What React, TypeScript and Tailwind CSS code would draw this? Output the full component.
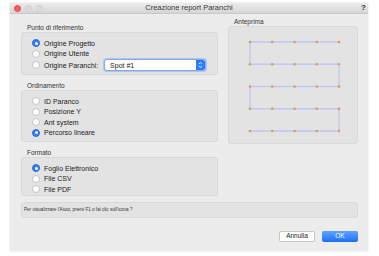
import React from "react";

const font = { fontFamily: '"Liberation Sans", Arial, sans-serif' };

function Radio({ label, checked }: { label: string; checked?: boolean }) {
  return (
    <div className="flex items-center h-[10.5px] gap-[4px]">
      {checked ? (
        <div className="w-[8px] h-[8px] rounded-full bg-[#2f7df6] border border-[#2a6fe0] flex items-center justify-center">
          <div className="w-[3px] h-[3px] rounded-full bg-white" />
        </div>
      ) : (
        <div className="w-[8px] h-[8px] rounded-full bg-white border border-[#c4c4c4]" />
      )}
      <span className="text-[7px] leading-none text-[#222]">{label}</span>
    </div>
  );
}

function Section({ title, children, h }: { title: string; children: React.ReactNode; h: string }) {
  return (
    <div className="flex flex-col">
      <div className="text-[6.5px] leading-none text-[#333] pl-[6px] h-[9px] flex items-end pb-[1px]">{title}</div>
      <div className={`rounded-[3px] bg-[#e3e3e3] border border-[#d9d9d9] pl-[10px] pt-[5px] ${h}`}>{children}</div>
    </div>
  );
}

function Preview() {
  const xs = [0, 1, 2, 3, 4].map((i) => 21 + 22.25 * i);
  const ys = [0, 1, 2, 3, 4].map((j) => 15 + 22.25 * j);
  let d = "";
  ys.forEach((y, j) => {
    const from = j % 2 === 0 ? xs[4] : xs[0];
    const to = j % 2 === 0 ? xs[0] : xs[4];
    if (j === 0) d += `M${from} ${y} L${to} ${y}`;
    else d += ` L${from} ${y} L${to} ${y}`;
  });
  return (
    <svg width="130" height="118" viewBox="0 0 130 118">
      <path d={d} fill="none" stroke="#c6c6ee" strokeWidth="1.4" />
      {ys.map((y) =>
        xs.map((x) => <circle key={`${x}-${y}`} cx={x} cy={y} r="1.3" fill="#c9a265" />)
      )}
    </svg>
  );
}

export default function App() {
  return (
    <div className="w-[379px] h-[256px] bg-white relative overflow-hidden" style={font}>
      <div className="ml-[10px] mt-[3px] w-[358px] h-[248px] bg-[#ececec] flex flex-col shadow-[0_0_2px_rgba(0,0,0,0.15)]">
        {/* title bar */}
        <div className="h-[11px] bg-gradient-to-b from-[#ebebeb] to-[#d6d6d6] border-b border-[#c8c8c8] flex items-center relative">
          <div className="flex gap-[4px] pl-[4px] items-center">
            <div className="w-[7px] h-[7px] rounded-full bg-[#fc605c] border border-[#e0443e]" />
            <div className="w-[7px] h-[7px] rounded-full bg-[#dcdcdc] border border-[#cfcfcf]" />
            <div className="w-[7px] h-[7px] rounded-full bg-[#dcdcdc] border border-[#cfcfcf]" />
          </div>
          <div className="absolute inset-0 flex items-center justify-center text-[7.5px] leading-none text-[#3a3a3a]">
            Creazione report Paranchi
          </div>
          <div className="absolute right-[2px] top-[1px] text-[8px] font-bold leading-none text-[#333]">?</div>
        </div>

        {/* body */}
        <div className="flex pl-[11px] pr-[10px] pt-[9px] gap-[10px]">
          <div className="w-[197px] flex flex-col gap-[2px]">
            <Section title="Punto di riferimento" h="h-[43px]">
              <Radio label="Origine Progetto" checked />
              <Radio label="Origine Utente" />
              <div className="flex items-center">
                <Radio label="Origine Paranchi:" />
                <div className="ml-[6px] w-[102px] h-[12px] bg-white rounded-[3px] border border-[#7fa9f0] shadow-[0_0_0_1px_rgba(80,140,240,0.35)] flex items-center justify-between">
                  <span className="text-[7px] leading-none text-[#222] pl-[5px]">Spot #1</span>
                  <div className="w-[9px] h-full bg-[#2f7df6] rounded-r-[2px] flex items-center justify-center">
                    <svg width="5" height="8" viewBox="0 0 5 8">
                      <path d="M1 3 L2.5 1.5 L4 3 M1 5 L2.5 6.5 L4 5" stroke="white" strokeWidth="0.8" fill="none" />
                    </svg>
                  </div>
                </div>
              </div>
            </Section>
            <div className="h-[2px]" />
            <Section title="Ordinamento" h="h-[52px]">
              <Radio label="ID Paranco" />
              <Radio label="Posizione Y" />
              <Radio label="Ant system" />
              <Radio label="Percorso lineare" checked />
            </Section>
            <div className="h-[2px]" />
            <Section title="Formato" h="h-[39px]">
              <Radio label="Foglio Elettronico" checked />
              <Radio label="File CSV" />
              <Radio label="File PDF" />
            </Section>
          </div>
          <div className="w-[130px] flex flex-col -mt-[6px]">
            <div className="text-[6.5px] leading-none text-[#333] pl-[6px] h-[9px] flex items-end pb-[1px]">Anteprima</div>
            <div className="h-[118px] rounded-[3px] bg-[#e3e3e3] border border-[#d9d9d9] overflow-hidden">
              <Preview />
            </div>
          </div>
        </div>

        {/* help */}
        <div className="mx-[11px] mr-[10px] mt-[6px] h-[16px] rounded-[3px] bg-[#e3e3e3] border border-[#d9d9d9] flex items-center pl-[2px]">
          <span className="text-[4.6px] leading-none text-[#333]">Per visualizzare l'Aiuto, premi F1 o fai clic sull'icona ?</span>
        </div>

        {/* buttons */}
        <div className="flex justify-end gap-[7px] pr-[10px] mt-[13px]">
          <div className="w-[36px] h-[11px] bg-white border border-[#c8c8c8] rounded-[2px] flex items-center justify-center text-[6.5px] leading-none text-[#222]">
            Annulla
          </div>
          <div className="w-[36px] h-[11px] bg-gradient-to-b from-[#5ea2fa] to-[#1b6ff5] rounded-[2px] flex items-center justify-center text-[6.5px] leading-none text-white">
            OK
          </div>
        </div>
      </div>
    </div>
  );
}
